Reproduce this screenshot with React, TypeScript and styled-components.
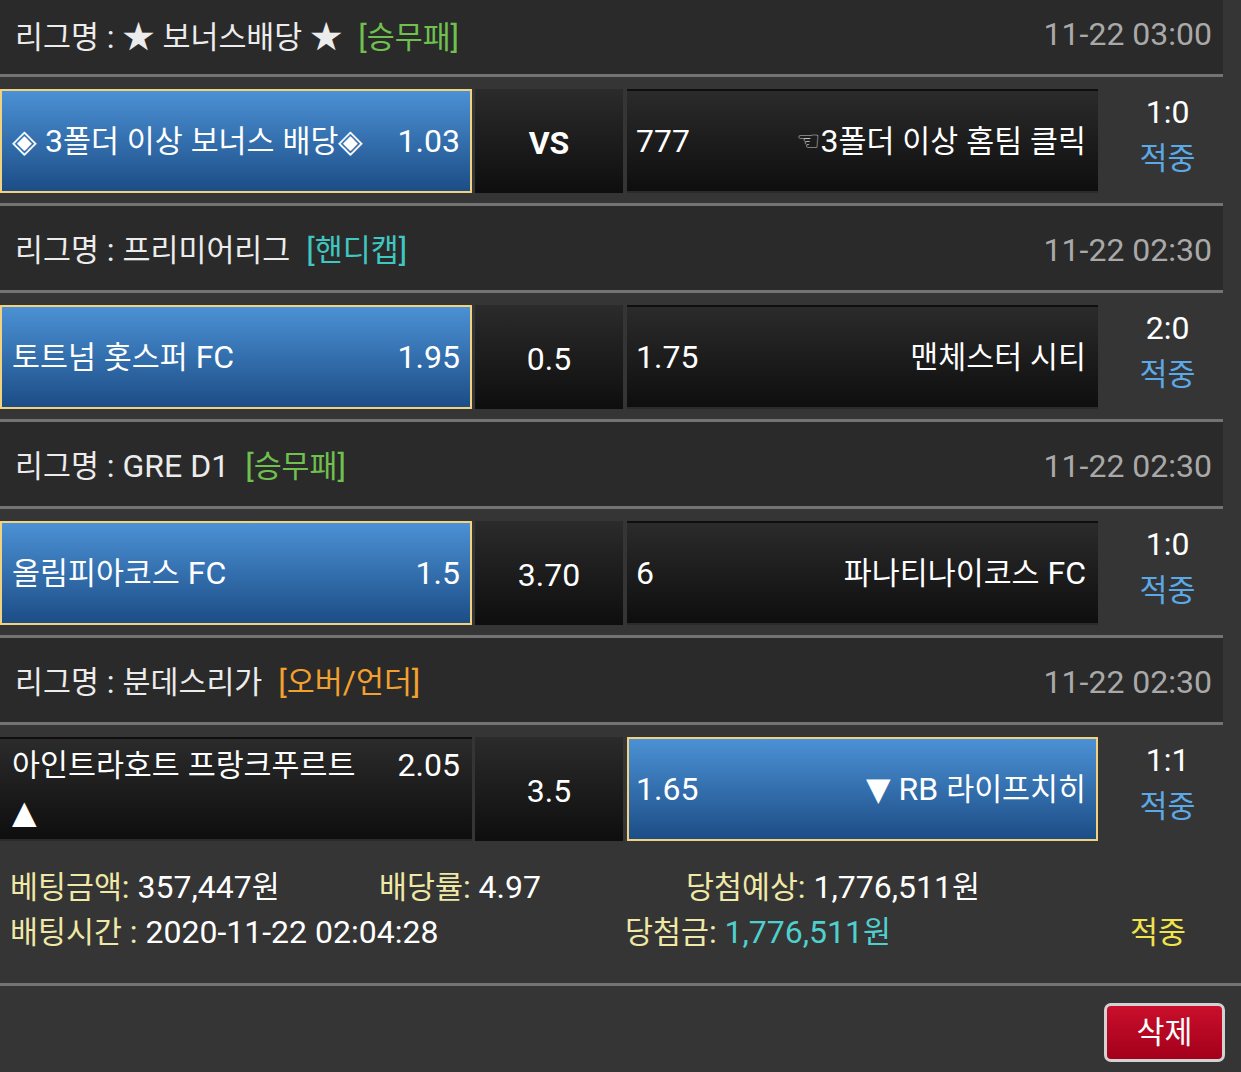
import React from 'react'
import styled, { createGlobalStyle } from 'styled-components'

const GlobalStyle = createGlobalStyle`
	* {
		box-sizing: border-box;
	}

	html, body {
		margin: 0;
		padding: 0;
		background: #353535;
		overflow: hidden;
	}

	body {
		font-family: Roboto, "Noto Sans CJK KR", sans-serif;
		font-size: 32px;
		color: #fff;
	}
`

const Page = styled.div`
	width: 1241px;
	margin-top: -13px;
`

const Hangul = styled.span`
	font-family: "Noto Sans CJK KR", sans-serif;
	font-size: 0.95em;
	line-height: 1;
`

const Arrow = styled.span`
	font-family: "DejaVu Sans", sans-serif;
	font-size: 1em;
	line-height: 1;
`

const Pointer = styled.span`
	font-family: "DejaVu Sans", sans-serif;
	font-size: 27px;
	line-height: 1;
	color: #c4c4c4;
	vertical-align: 2px;
`

const LeagueHeader = styled.div`
	width: 1223px;
	height: 90px;
	padding: 3px 11px 0 15px;
	background: #2a2a2a;
	border-top: 3px solid #737373;
	border-bottom: 3px solid #737373;
	display: flex;
	align-items: center;
	justify-content: space-between;
	color: #ececec;
	white-space: nowrap;
`

const LeagueName = styled.span``

const Market = styled.span<{ $tone: string }>`
	margin-left: 16px;
	color: ${p => p.$tone};
`

const KickOff = styled.span`
	color: #a9a9a9;
`

const MatchRow = styled.div`
	display: flex;
	height: 104px;
	margin: 12px 0 10px;
`

const Pick = styled.div<{ $on?: boolean; $w: number; $away?: boolean }>`
	width: ${p => p.$w}px;
	flex: none;
	display: flex;
	align-items: center;
	padding: ${p => (p.$away ? '0 10px 0 7px' : '0 10px')};
	border: 2px solid ${p => (p.$on ? '#f1d37f' : 'transparent')};
	background: ${p => (p.$on
		? 'linear-gradient(#4b91d5, #1c4d86)'
		: 'linear-gradient(#2b2b2b, #0e0e0e)')};
`

const PickBody = styled.div`
	display: flex;
	align-items: flex-start;
	gap: 30px;
	width: 100%;
	line-height: 47px;
`

const Team = styled.span<{ $right?: boolean }>`
	flex: 1;
	min-width: 0;
	text-align: ${p => (p.$right ? 'right' : 'left')};
`

const Odds = styled.span`
	flex: none;
`

const Line = styled.div<{ $bold?: boolean }>`
	width: 148px;
	flex: none;
	margin: 0 4px 0 3px;
	display: flex;
	align-items: center;
	justify-content: center;
	padding-top: 3px;
	font-weight: ${p => (p.$bold ? 700 : 400)};
	background: linear-gradient(#2b2b2b, #0e0e0e);
`

const Result = styled.div`
	flex: 1;
	display: flex;
	flex-direction: column;
	align-items: center;
	justify-content: center;
	line-height: 46px;
	padding: 0 4px 12px 0;
`

const Hit = styled.span`
	color: #5ba9e6;
`

const Summary = styled.div`
	padding: 14px 10px 28px;
	border-bottom: 3px solid #737373;
`

const SummaryLine = styled.div<{ $cols: string }>`
	display: grid;
	grid-template-columns: ${p => p.$cols};
	line-height: 45px;
	white-space: nowrap;
`

const Label = styled.span`
	color: #efe8a6;
`

const Value = styled.span<{ $tone?: string }>`
	color: ${p => p.$tone ?? '#fff'};
`

const Status = styled.span`
	color: #f1e34b;
`

const Actions = styled.div`
	display: flex;
	justify-content: flex-end;
	padding: 17px 16px 0;
`

const DeleteButton = styled.button`
	width: 121px;
	height: 59px;
	border: 3px solid #d2d2d2;
	border-radius: 7px;
	background: linear-gradient(#c90f2b, #a3001b);
	color: #fff;
	font: inherit;
	line-height: 1;
	padding: 0 0 3px;
	cursor: pointer;
`

const SPLIT = /([\u3131-\u318e\uac00-\ud7a3]+|[▲▼])/
const HANGUL = /^[\u3131-\u318e\uac00-\ud7a3]+$/

const Txt = ({ children }: { children: string }) => (
	<>
		{children.split(SPLIT).map((part, i) => {
			if (i % 2 === 0) return part
			return HANGUL.test(part) ? <Hangul key={i}>{part}</Hangul> : <Arrow key={i}>{part}</Arrow>
		})}
	</>
)

type Bet = {
	league: string
	market: string
	tone: string
	time: string
	home: string
	homeOdds: string
	line: string
	awayOdds: string
	away: string
	hint?: boolean
	score: string
	pick: 'home' | 'away'
}

const GREEN = '#6fc04e'
const TEAL = '#3fc7c1'
const ORANGE = '#f3a12e'

const bets: Bet[] = [
	{
		league: '★ 보너스배당 ★', market: '[승무패]', tone: GREEN, time: '11-22 03:00',
		home: '◈ 3폴더 이상 보너스 배당◈', homeOdds: '1.03', line: 'VS',
		awayOdds: '777', away: '3폴더 이상 홈팀 클릭', hint: true, score: '1:0', pick: 'home',
	},
	{
		league: '프리미어리그', market: '[핸디캡]', tone: TEAL, time: '11-22 02:30',
		home: '토트넘 홋스퍼 FC', homeOdds: '1.95', line: '0.5',
		awayOdds: '1.75', away: '맨체스터 시티', score: '2:0', pick: 'home',
	},
	{
		league: 'GRE D1', market: '[승무패]', tone: GREEN, time: '11-22 02:30',
		home: '올림피아코스 FC', homeOdds: '1.5', line: '3.70',
		awayOdds: '6', away: '파나티나이코스 FC', score: '1:0', pick: 'home',
	},
	{
		league: '분데스리가', market: '[오버/언더]', tone: ORANGE, time: '11-22 02:30',
		home: '아인트라호트 프랑크푸르트 ▲', homeOdds: '2.05', line: '3.5',
		awayOdds: '1.65', away: '▼ RB 라이프치히', score: '1:1', pick: 'away',
	},
]

const BetBlock = ({ bet }: { bet: Bet }) => (
	<>
		<LeagueHeader>
			<LeagueName>
				<Txt>{`리그명 : ${bet.league}`}</Txt>
				<Market $tone={bet.tone}><Txt>{bet.market}</Txt></Market>
			</LeagueName>
			<KickOff>{bet.time}</KickOff>
		</LeagueHeader>
		<MatchRow>
			<Pick $w={472} $on={bet.pick === 'home'}>
				<PickBody>
					<Team><Txt>{bet.home}</Txt></Team>
					<Odds>{bet.homeOdds}</Odds>
				</PickBody>
			</Pick>
			<Line $bold={bet.line === 'VS'}>{bet.line}</Line>
			<Pick $w={471} $away $on={bet.pick === 'away'}>
				<PickBody>
					<Odds>{bet.awayOdds}</Odds>
					<Team $right>
						{bet.hint && <Pointer>☜</Pointer>}
						<Txt>{bet.away}</Txt>
					</Team>
				</PickBody>
			</Pick>
			<Result>
				<span>{bet.score}</span>
				<Hit><Txt>적중</Txt></Hit>
			</Result>
		</MatchRow>
	</>
)

const App = () => {
	return (
		<Page>
			<GlobalStyle />
			{bets.map(bet => <BetBlock key={bet.league} bet={bet} />)}
			<Summary>
				<SummaryLine $cols='369px 307px 1fr'>
					<span><Label><Txt>베팅금액:</Txt></Label> <Value>357,447<Txt>원</Txt></Value></span>
					<span><Label><Txt>배당률:</Txt></Label> <Value>4.97</Value></span>
					<span><Label><Txt>당첨예상:</Txt></Label> <Value>1,776,511<Txt>원</Txt></Value></span>
				</SummaryLine>
				<SummaryLine $cols='615px 505px 1fr'>
					<span><Label><Txt>배팅시간 :</Txt></Label> <Value>2020-11-22 02:04:28</Value></span>
					<span><Label><Txt>당첨금:</Txt></Label> <Value $tone='#4fd0cf'>1,776,511<Txt>원</Txt></Value></span>
					<Status><Txt>적중</Txt></Status>
				</SummaryLine>
			</Summary>
			<Actions>
				<DeleteButton><Txt>삭제</Txt></DeleteButton>
			</Actions>
		</Page>
	)
}

export default App
